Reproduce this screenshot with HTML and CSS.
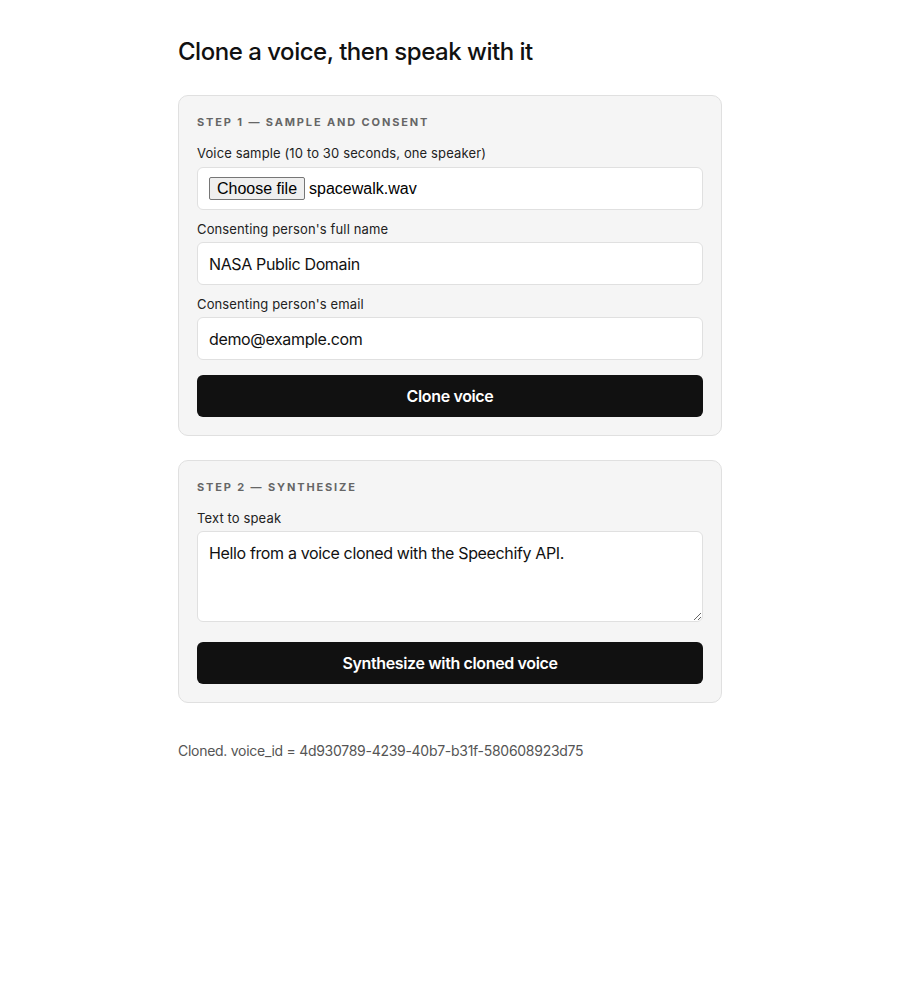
FILE: index.html
```html
<!DOCTYPE html>
<html lang="en">
<head>
<meta charset="utf-8">
<title>Clone a voice</title>
<link rel="stylesheet" href="styles.css">
</head>
<body>
<main class="page">
  <h1 class="title">Clone a voice, then speak with it</h1>

  <section class="card">
    <h2 class="step">Step 1 — Sample and consent</h2>
    <div class="field">
      <label class="label">Voice sample (10 to 30 seconds, one speaker)</label>
      <div class="input file-input">
        <span class="file-btn">Choose file</span>
        <span class="file-name">spacewalk.wav</span>
      </div>
    </div>
    <div class="field">
      <label class="label" for="name">Consenting person's full name</label>
      <input class="input" id="name" type="text" value="NASA Public Domain">
    </div>
    <div class="field field-last">
      <label class="label" for="email">Consenting person's email</label>
      <input class="input" id="email" type="email" value="demo@example.com">
    </div>
    <button class="btn" type="button">Clone voice</button>
  </section>

  <section class="card">
    <h2 class="step">Step 2 — Synthesize</h2>
    <div class="field field-last2">
      <label class="label" for="text">Text to speak</label>
      <textarea class="input textarea" id="text">Hello from a voice cloned with the Speechify API.</textarea>
    </div>
    <button class="btn" type="button">Synthesize with cloned voice</button>
  </section>

  <p class="status">Cloned. voice_id = 4d930789-4239-40b7-b31f-580608923d75</p>
</main>
</body>
</html>
```

FILE: styles.css
```css
* { box-sizing: border-box; }

body {
  margin: 0;
  font-family: Inter, "Noto Sans", "Liberation Sans", sans-serif;
  color: #111;
  background: #fff;
}

.page {
  width: 544px;
  margin: 0 auto;
  padding-top: 37px;
}

.title {
  margin: 0 0 28px;
  font-size: 24px;
  line-height: 30px;
  font-weight: 500;
  letter-spacing: -0.02em;
  color: #111;
}

.card {
  background: #f5f5f5;
  border: 1px solid #e0e0e0;
  border-radius: 10px;
  padding: 18px;
  margin-bottom: 24px;
}

.step {
  margin: 0 0 14px;
  font-size: 11px;
  line-height: 16px;
  font-weight: 700;
  letter-spacing: 0.17em;
  text-transform: uppercase;
  color: #666;
}

.field {
  margin-bottom: 10px;
}

.field-first .label { margin-bottom: 5px; }
.field-last { margin-bottom: 15px; }
.field-last2 { margin-bottom: 20px; }

.label {
  display: block;
  font-size: 13px;
  line-height: 18px;
  letter-spacing: 0.13px;
  color: #222;
  margin-bottom: 4px;
}

.input {
  display: block;
  width: 100%;
  height: 43px;
  padding: 0 11px;
  background: #fff;
  border: 1px solid #e0e0e0;
  border-radius: 6px;
  font-family: inherit;
  font-size: 16px;
  letter-spacing: -0.36px;
  color: #111;
  outline: none;
}

.file-input {
  display: flex;
  align-items: center;
  gap: 4px;
  letter-spacing: 0;
  margin-top: 5px;
}

.file-btn {
  display: inline-flex;
  align-items: center;
  height: 23px;
  padding: 0 7px;
  background: #efefef;
  border: 1px solid #767676;
  border-radius: 2px;
  font-family: "Liberation Sans", Arial, sans-serif;
  font-size: 16px;
  color: #000;
}

.file-name {
  font-family: "Liberation Sans", Arial, sans-serif;
  font-size: 16px;
  color: #000;
}

.textarea {
  height: 91px;
  padding: 11px 11px;
  line-height: 20px;
  resize: vertical;
}

.btn {
  display: block;
  width: 100%;
  height: 42px;
  border: 0;
  border-radius: 6px;
  background: #111;
  color: #fff;
  font-family: inherit;
  font-size: 16px;
  font-weight: 600;
  letter-spacing: -0.36px;
}

.status {
  margin: 38px 0 0;
  font-size: 14px;
  line-height: 20px;
  letter-spacing: -0.28px;
  color: #555;
}
```
